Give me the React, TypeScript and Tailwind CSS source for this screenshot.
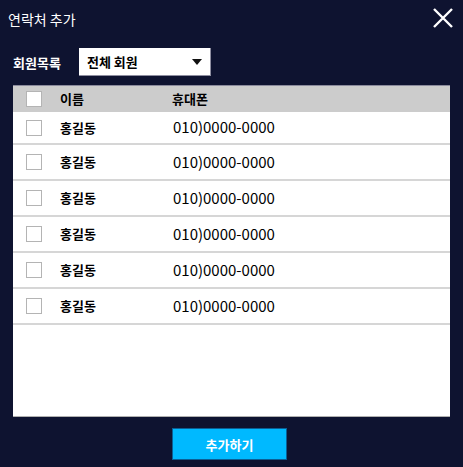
const rows = Array.from({ length: 6 }).map(() => ({
  name: "홍길동",
  phone: "010)0000-0000",
}));

const font = { fontFamily: '"Noto Sans CJK KR", "Noto Sans", sans-serif' };

function Check() {
  return <span className="block w-[16px] h-[16px] bg-white border border-[#b4b4b4]" />;
}

export default function App() {
  return (
    <div
      className="w-[463px] h-[467px] bg-[#0e1330] flex flex-col overflow-hidden"
      style={font}
    >
      <div className="h-[38px] flex items-center justify-between pl-[8px] pr-[10px]">
        <span className="text-white text-[14px] leading-none">연락처 추가</span>
        <svg width="20" height="20" viewBox="0 0 20 20" className="-mt-[2px]">
          <path d="M1 1 L19 19 M19 1 L1 19" stroke="white" strokeWidth="2.4" />
        </svg>
      </div>

      <div className="mt-[10px] flex items-center pl-[13px]">
        <span className="w-[66px] text-white text-[13px] font-bold leading-none">회원목록</span>
        <div className="w-[132px] h-[28px] bg-white border-r border-b border-[#8e8ea0] flex items-center justify-between pl-[8px] pr-[8px]">
          <span className="text-[13px] font-bold text-black leading-none">전체 회원</span>
          <svg width="10" height="6" viewBox="0 0 10 6">
            <path d="M0 0 H10 L5 6 Z" fill="#111" />
          </svg>
        </div>
      </div>

      <div className="mt-[9px] ml-[13px] w-[437px] h-[332px] bg-white border-b border-[#b0b0b0] flex flex-col">
        <div className="h-[27px] bg-[#cccccc] border-t border-[#8a8a9c] flex items-center pl-[13px] text-[13px] font-bold text-black">
          <Check />
          <span className="ml-[18px] w-[112px]">이름</span>
          <span>휴대폰</span>
        </div>
        {rows.map((r, i) => (
          <div
            key={i}
            className={`${i === 0 ? "h-[33px]" : "h-[36px]"} border-b-2 border-[#d6d6d6] flex items-center pl-[13px] text-black`}
          >
            <Check />
            <span className="ml-[18px] w-[113px] text-[13px] font-bold">{r.name}</span>
            <span className="text-[15px]">{r.phone}</span>
          </div>
        ))}
      </div>

      <div className="mt-[11px] flex pl-[172px]">
        <button className="w-[115px] h-[32px] bg-[#00b9ff] border border-[#0a5f95] text-white text-[13px] font-bold leading-none">
          추가하기
        </button>
      </div>
    </div>
  );
}
